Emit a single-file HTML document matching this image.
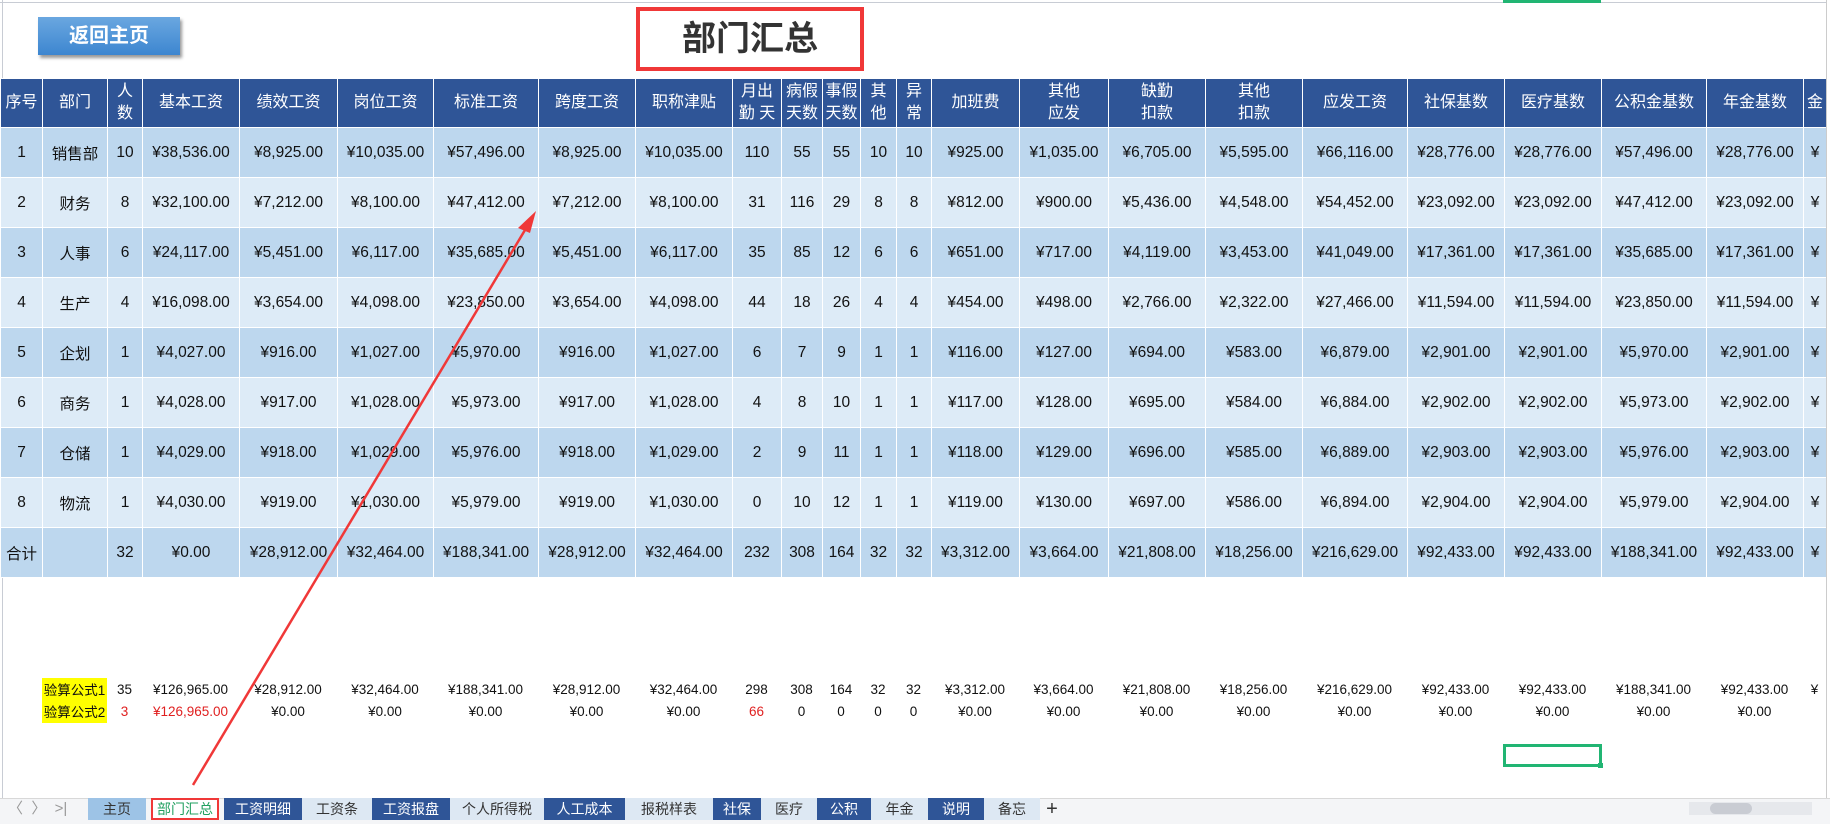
<!DOCTYPE html>
<html><head><meta charset="utf-8"><style>
*{margin:0;padding:0;box-sizing:border-box}
body{width:1830px;height:824px;overflow:hidden;background:#fff;position:relative;font-family:"Liberation Sans","Noto Sans CJK SC",sans-serif;color:#111}
.abs{position:absolute}
table{border-collapse:collapse;table-layout:fixed;position:absolute;left:0}
td{text-align:center;overflow:hidden;white-space:nowrap;padding:0}
#main td{border:1px solid #fff;font-size:15.5px;height:50px}
#main tr.h td{background:#2f5597;color:#fff;font-size:16px;line-height:22px;white-space:normal;height:49px}
#main tr.o td{background:#bdd7ee}
#main tr.e td{background:#ddebf7}
#ver td{font-size:13.5px;height:22px}
.r{color:#e02020}
.tab{position:absolute;top:798px;height:22px;font-size:14px;line-height:22px;text-align:center}
.d{background:#2f5597;color:#fff}.l{background:#dde8f3;color:#333}
</style></head><body>
<div class="abs" style="left:0;top:0;width:1830px;height:3px;border-bottom:1px solid #c8ccd4"></div>
<div class="abs" style="left:2px;top:0;width:1px;height:798px;background:#c8ccd4"></div>
<div class="abs" style="left:1503px;top:0;width:98px;height:3px;background:#21b573"></div>
<div class="abs" style="left:38px;top:17px;width:142px;height:38px;background:linear-gradient(#6aa7e0,#3d86d0);box-shadow:2px 3px 3px #999;color:#fff;font-weight:bold;font-size:20px;line-height:38px;text-align:center">返回主页</div>
<div class="abs" style="left:636px;top:7px;width:228px;height:64px;border:4px solid #f03838;font-weight:bold;font-size:34px;line-height:56px;text-align:center;color:#333">部门汇总</div>

<table id="main" style="top:78px;width:1826px">
<colgroup><col style="width:42px"><col style="width:65px"><col style="width:35px"><col style="width:97px"><col style="width:98px"><col style="width:96px"><col style="width:105px"><col style="width:97px"><col style="width:97px"><col style="width:49px"><col style="width:41px"><col style="width:38px"><col style="width:36px"><col style="width:35px"><col style="width:88px"><col style="width:89px"><col style="width:97px"><col style="width:97px"><col style="width:105px"><col style="width:97px"><col style="width:97px"><col style="width:105px"><col style="width:97px"><col style="width:23px"></colgroup>
<tr class="h"><td>序号</td><td>部门</td><td>人<br>数</td><td>基本工资</td><td>绩效工资</td><td>岗位工资</td><td>标准工资</td><td>跨度工资</td><td>职称津贴</td><td>月出<br>勤 天</td><td>病假<br>天数</td><td>事假<br>天数</td><td>其<br>他</td><td>异<br>常</td><td>加班费</td><td>其他<br>应发</td><td>缺勤<br>扣款</td><td>其他<br>扣款</td><td>应发工资</td><td>社保基数</td><td>医疗基数</td><td>公积金基数</td><td>年金基数</td><td>金</td></tr>
<tr class="o"><td>1</td><td>销售部</td><td>10</td><td>¥38,536.00</td><td>¥8,925.00</td><td>¥10,035.00</td><td>¥57,496.00</td><td>¥8,925.00</td><td>¥10,035.00</td><td>110</td><td>55</td><td>55</td><td>10</td><td>10</td><td>¥925.00</td><td>¥1,035.00</td><td>¥6,705.00</td><td>¥5,595.00</td><td>¥66,116.00</td><td>¥28,776.00</td><td>¥28,776.00</td><td>¥57,496.00</td><td>¥28,776.00</td><td>¥</td></tr>
<tr class="e"><td>2</td><td>财务</td><td>8</td><td>¥32,100.00</td><td>¥7,212.00</td><td>¥8,100.00</td><td>¥47,412.00</td><td>¥7,212.00</td><td>¥8,100.00</td><td>31</td><td>116</td><td>29</td><td>8</td><td>8</td><td>¥812.00</td><td>¥900.00</td><td>¥5,436.00</td><td>¥4,548.00</td><td>¥54,452.00</td><td>¥23,092.00</td><td>¥23,092.00</td><td>¥47,412.00</td><td>¥23,092.00</td><td>¥</td></tr>
<tr class="o"><td>3</td><td>人事</td><td>6</td><td>¥24,117.00</td><td>¥5,451.00</td><td>¥6,117.00</td><td>¥35,685.00</td><td>¥5,451.00</td><td>¥6,117.00</td><td>35</td><td>85</td><td>12</td><td>6</td><td>6</td><td>¥651.00</td><td>¥717.00</td><td>¥4,119.00</td><td>¥3,453.00</td><td>¥41,049.00</td><td>¥17,361.00</td><td>¥17,361.00</td><td>¥35,685.00</td><td>¥17,361.00</td><td>¥</td></tr>
<tr class="e"><td>4</td><td>生产</td><td>4</td><td>¥16,098.00</td><td>¥3,654.00</td><td>¥4,098.00</td><td>¥23,850.00</td><td>¥3,654.00</td><td>¥4,098.00</td><td>44</td><td>18</td><td>26</td><td>4</td><td>4</td><td>¥454.00</td><td>¥498.00</td><td>¥2,766.00</td><td>¥2,322.00</td><td>¥27,466.00</td><td>¥11,594.00</td><td>¥11,594.00</td><td>¥23,850.00</td><td>¥11,594.00</td><td>¥</td></tr>
<tr class="o"><td>5</td><td>企划</td><td>1</td><td>¥4,027.00</td><td>¥916.00</td><td>¥1,027.00</td><td>¥5,970.00</td><td>¥916.00</td><td>¥1,027.00</td><td>6</td><td>7</td><td>9</td><td>1</td><td>1</td><td>¥116.00</td><td>¥127.00</td><td>¥694.00</td><td>¥583.00</td><td>¥6,879.00</td><td>¥2,901.00</td><td>¥2,901.00</td><td>¥5,970.00</td><td>¥2,901.00</td><td>¥</td></tr>
<tr class="e"><td>6</td><td>商务</td><td>1</td><td>¥4,028.00</td><td>¥917.00</td><td>¥1,028.00</td><td>¥5,973.00</td><td>¥917.00</td><td>¥1,028.00</td><td>4</td><td>8</td><td>10</td><td>1</td><td>1</td><td>¥117.00</td><td>¥128.00</td><td>¥695.00</td><td>¥584.00</td><td>¥6,884.00</td><td>¥2,902.00</td><td>¥2,902.00</td><td>¥5,973.00</td><td>¥2,902.00</td><td>¥</td></tr>
<tr class="o"><td>7</td><td>仓储</td><td>1</td><td>¥4,029.00</td><td>¥918.00</td><td>¥1,029.00</td><td>¥5,976.00</td><td>¥918.00</td><td>¥1,029.00</td><td>2</td><td>9</td><td>11</td><td>1</td><td>1</td><td>¥118.00</td><td>¥129.00</td><td>¥696.00</td><td>¥585.00</td><td>¥6,889.00</td><td>¥2,903.00</td><td>¥2,903.00</td><td>¥5,976.00</td><td>¥2,903.00</td><td>¥</td></tr>
<tr class="e"><td>8</td><td>物流</td><td>1</td><td>¥4,030.00</td><td>¥919.00</td><td>¥1,030.00</td><td>¥5,979.00</td><td>¥919.00</td><td>¥1,030.00</td><td>0</td><td>10</td><td>12</td><td>1</td><td>1</td><td>¥119.00</td><td>¥130.00</td><td>¥697.00</td><td>¥586.00</td><td>¥6,894.00</td><td>¥2,904.00</td><td>¥2,904.00</td><td>¥5,979.00</td><td>¥2,904.00</td><td>¥</td></tr>
<tr class="o"><td>合计</td><td></td><td>32</td><td>¥0.00</td><td>¥28,912.00</td><td>¥32,464.00</td><td>¥188,341.00</td><td>¥28,912.00</td><td>¥32,464.00</td><td>232</td><td>308</td><td>164</td><td>32</td><td>32</td><td>¥3,312.00</td><td>¥3,664.00</td><td>¥21,808.00</td><td>¥18,256.00</td><td>¥216,629.00</td><td>¥92,433.00</td><td>¥92,433.00</td><td>¥188,341.00</td><td>¥92,433.00</td><td>¥</td></tr>
</table>

<div class="abs" style="left:42px;top:678px;width:65px;height:45px;background:#ffff00"></div>
<table id="ver" style="top:678px;width:1826px">
<colgroup><col style="width:42px"><col style="width:65px"><col style="width:35px"><col style="width:97px"><col style="width:98px"><col style="width:96px"><col style="width:105px"><col style="width:97px"><col style="width:97px"><col style="width:49px"><col style="width:41px"><col style="width:38px"><col style="width:36px"><col style="width:35px"><col style="width:88px"><col style="width:89px"><col style="width:97px"><col style="width:97px"><col style="width:105px"><col style="width:97px"><col style="width:97px"><col style="width:105px"><col style="width:97px"><col style="width:23px"></colgroup>
<tr><td></td><td>验算公式1</td><td>35</td><td>¥126,965.00</td><td>¥28,912.00</td><td>¥32,464.00</td><td>¥188,341.00</td><td>¥28,912.00</td><td>¥32,464.00</td><td>298</td><td>308</td><td>164</td><td>32</td><td>32</td><td>¥3,312.00</td><td>¥3,664.00</td><td>¥21,808.00</td><td>¥18,256.00</td><td>¥216,629.00</td><td>¥92,433.00</td><td>¥92,433.00</td><td>¥188,341.00</td><td>¥92,433.00</td><td>¥</td></tr>
<tr><td></td><td>验算公式2</td><td class="r">3</td><td class="r">¥126,965.00</td><td>¥0.00</td><td>¥0.00</td><td>¥0.00</td><td>¥0.00</td><td>¥0.00</td><td class="r">66</td><td>0</td><td>0</td><td>0</td><td>0</td><td>¥0.00</td><td>¥0.00</td><td>¥0.00</td><td>¥0.00</td><td>¥0.00</td><td>¥0.00</td><td>¥0.00</td><td>¥0.00</td><td>¥0.00</td><td></td></tr>
</table>

<div class="abs" style="left:1503px;top:744px;width:99px;height:23px;border:3px solid #21b573"></div>
<div class="abs" style="left:1598px;top:763px;width:5px;height:5px;background:#21b573"></div>
<div class="abs" style="left:1826px;top:0;width:4px;height:798px;background:#fff;border-left:1px solid #ccc"></div>

<svg class="abs" style="left:0;top:0" width="1830" height="824"><line x1="193" y1="785" x2="528" y2="225" stroke="#f03838" stroke-width="2.5"/><polygon points="536,211 518,228 530,233" fill="#f03838"/></svg>

<div class="abs" style="left:0;top:798px;width:1830px;height:26px;background:#f4f5f7;border-top:1px solid #d8d8d8"></div>
<div class="abs" style="left:8px;top:798px;font-size:15px;line-height:22px;color:#999">〈 &nbsp;〉 &nbsp;&gt;|</div>
<div class="tab" style="left:88px;width:58px;background:#9dc3e6;color:#333">主页</div>
<div class="tab" style="left:151px;width:68px;background:#fff;color:#21a060;border:2px solid #f03838;line-height:18px">部门汇总</div>
<div class="tab d" style="left:224px;width:78px">工资明细</div>
<div class="tab l" style="left:302px;width:70px">工资条</div>
<div class="tab d" style="left:372px;width:78px">工资报盘</div>
<div class="tab l" style="left:450px;width:94px">个人所得税</div>
<div class="tab d" style="left:544px;width:81px">人工成本</div>
<div class="tab l" style="left:625px;width:88px">报税样表</div>
<div class="tab d" style="left:713px;width:48px">社保</div>
<div class="tab l" style="left:761px;width:56px">医疗</div>
<div class="tab d" style="left:817px;width:54px">公积</div>
<div class="tab l" style="left:871px;width:57px">年金</div>
<div class="tab d" style="left:928px;width:56px">说明</div>
<div class="tab l" style="left:984px;width:56px">备忘</div>
<div class="tab" style="left:1042px;width:20px;font-size:20px;color:#333">+</div>
<div class="abs" style="left:1689px;top:802px;width:123px;height:13px;background:#e6e8ec"></div>
<div class="abs" style="left:1710px;top:803px;width:42px;height:11px;border-radius:6px;background:#c9ccd3"></div>
</body></html>
